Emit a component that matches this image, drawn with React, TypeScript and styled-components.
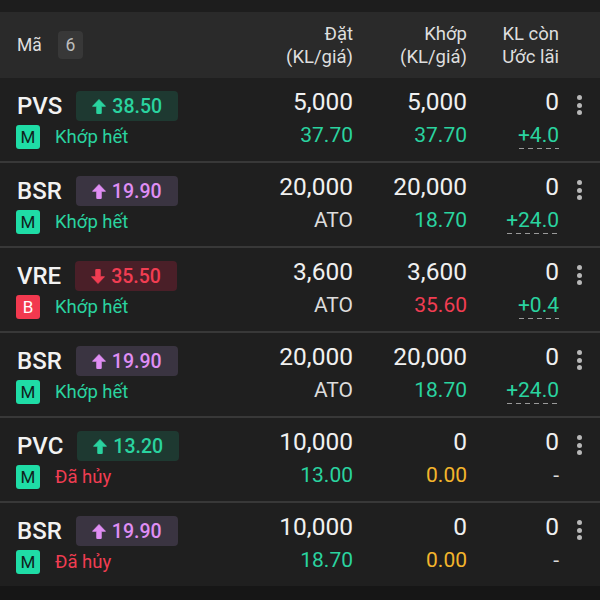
import styled, { createGlobalStyle } from "styled-components";

const GlobalStyle = createGlobalStyle`
  html, body {
    margin: 0;
    padding: 0;
    background: #121212;
  }
  body {
    font-family: Roboto, "Noto Sans", "Liberation Sans", sans-serif;
  }
`;

const GREEN = "#2ad39f";
const RED = "#f13d52";
const PURPLE = "#e08ef4";
const YELLOW = "#f3b52c";

type Tone = "green" | "red" | "purple" | "yellow" | "plain";

const toneColor: Record<Tone, string> = {
  green: GREEN,
  red: RED,
  purple: PURPLE,
  yellow: YELLOW,
  plain: "#dcdcdc",
};

const badgeBg: Record<string, string> = {
  green: "#1e3931",
  red: "#4a1f28",
  purple: "#3a3441",
};

const Screen = styled.div`
  width: 600px;
  height: 600px;
  background: #161616;
  display: flex;
  flex-direction: column;
  overflow: hidden;
`;

const TopStrip = styled.div`
  height: 12px;
  background: #1d1d1d;
`;

const Header = styled.div`
  height: 66px;
  background: #2a2a2a;
  display: grid;
  grid-template-columns: 1fr 110px 114px 92px 41px;
  align-items: center;
  padding-left: 17px;
  box-sizing: border-box;
  color: #dedede;
  font-size: 18.5px;
`;

const HeadLeft = styled.div`
  display: flex;
  align-items: center;
  gap: 16px;
  font-size: 17.5px;
`;

const CountBox = styled.span`
  width: 25px;
  height: 28px;
  border-radius: 4px;
  background: #383838;
  color: #bdbdbd;
  display: flex;
  align-items: center;
  justify-content: center;
  font-size: 17.5px;
`;

const HeadCol = styled.div`
  text-align: right;
  line-height: 23px;
  padding-top: 1px;
`;

const List = styled.div`
  display: flex;
  flex-direction: column;
`;

const Row = styled.div`
  height: 85px;
  box-sizing: border-box;
  border-bottom: 2px solid #383838;
  background: #1f1f1f;
  display: grid;
  grid-template-columns: 1fr 110px 114px 92px 41px;
  grid-template-rows: 30px 24px;
  row-gap: 4px;
  padding: 13px 0 12px 16px;

  &:last-child {
    border-bottom: none;
    height: 83px;
  }
`;

const SymbolLine = styled.div`
  display: flex;
  align-items: center;
  gap: 14px;
`;

const Symbol = styled.span`
  color: #f2f2f2;
  font-size: 24px;
  font-weight: 500;
  padding-left: 1px;
`;

const PriceBadge = styled.span<{ $tone: Tone }>`
  height: 30px;
  padding: 0 16px;
  border-radius: 4px;
  background: ${(p) => badgeBg[p.$tone]};
  color: ${(p) => toneColor[p.$tone]};
  display: flex;
  align-items: center;
  gap: 6px;
  font-size: 19.5px;
  font-weight: 500;
`;

const StatusLine = styled.div`
  display: flex;
  align-items: center;
  gap: 15px;
  white-space: nowrap;
`;

const SideBox = styled.span<{ $buy: boolean }>`
  width: 24px;
  height: 24px;
  border-radius: 3px;
  background: ${(p) => (p.$buy ? "#f2394f" : "#1fdca6")};
  color: ${(p) => (p.$buy ? "#ffffff" : "#10221c")};
  display: flex;
  align-items: center;
  justify-content: center;
  font-size: 17px;
`;

const Status = styled.span<{ $tone: Tone }>`
  color: ${(p) => toneColor[p.$tone]};
  font-size: 18.5px;
`;

const Top = styled.div<{ $col: number }>`
  grid-row: 1;
  grid-column: ${(p) => p.$col};
  text-align: right;
  color: #f0f0f0;
  font-size: 24.5px;
  line-height: 30px;
  margin-top: -4px;
`;

const Bottom = styled.div<{ $tone: Tone; $col: number }>`
  grid-row: 2;
  grid-column: ${(p) => p.$col};
  text-align: right;
  color: ${(p) => toneColor[p.$tone]};
  font-size: 21px;
  line-height: 24px;
  margin-top: -2px;
`;

const Dashed = styled.span`
  position: relative;
  display: inline-block;
  &::after {
    content: "";
    position: absolute;
    left: 1px;
    right: 0;
    bottom: -2px;
    height: 1px;
    background: repeating-linear-gradient(
      to right,
      #9a9a9a 0 5px,
      transparent 5px 9px
    );
  }
`;

const Menu = styled.div`
  grid-row: 1 / span 2;
  grid-column: 5;
  display: flex;
  flex-direction: column;
  align-items: center;
  gap: 2.5px;
  padding-top: 4px;
`;

const Dot = styled.span`
  width: 5px;
  height: 5px;
  border-radius: 50%;
  background: #b8b8b8;
`;

const Arrow = ({ down }: { down?: boolean }) => (
  <svg
    width="14"
    height="15"
    viewBox="0 0 14 15"
    style={{ transform: down ? "rotate(180deg)" : undefined }}
  >
    <path
      d="M7 0.5 L13.5 7.3 L9.3 7.3 L9.3 14 Q9.3 15 8.3 15 L5.7 15 Q4.7 15 4.7 14 L4.7 7.3 L0.5 7.3 Z"
      fill="currentColor"
      stroke="currentColor"
      strokeWidth="0.8"
      strokeLinejoin="round"
    />
  </svg>
);

type Order = {
  sym: string;
  price: string;
  priceTone: Tone;
  down?: boolean;
  buy?: boolean;
  status: string;
  statusTone: Tone;
  qty: string;
  px: string;
  pxTone: Tone;
  mQty: string;
  mPx: string;
  mPxTone: Tone;
  left: string;
  pnl: string;
  pnlTone: Tone;
  dashed?: boolean;
};

const orders: Order[] = [
  { sym: "PVS", price: "38.50", priceTone: "green", status: "Khớp hết", statusTone: "green", qty: "5,000", px: "37.70", pxTone: "green", mQty: "5,000", mPx: "37.70", mPxTone: "green", left: "0", pnl: "+4.0", pnlTone: "green", dashed: true },
  { sym: "BSR", price: "19.90", priceTone: "purple", status: "Khớp hết", statusTone: "green", qty: "20,000", px: "ATO", pxTone: "plain", mQty: "20,000", mPx: "18.70", mPxTone: "green", left: "0", pnl: "+24.0", pnlTone: "green", dashed: true },
  { sym: "VRE", price: "35.50", priceTone: "red", down: true, buy: true, status: "Khớp hết", statusTone: "green", qty: "3,600", px: "ATO", pxTone: "plain", mQty: "3,600", mPx: "35.60", mPxTone: "red", left: "0", pnl: "+0.4", pnlTone: "green", dashed: true },
  { sym: "BSR", price: "19.90", priceTone: "purple", status: "Khớp hết", statusTone: "green", qty: "20,000", px: "ATO", pxTone: "plain", mQty: "20,000", mPx: "18.70", mPxTone: "green", left: "0", pnl: "+24.0", pnlTone: "green", dashed: true },
  { sym: "PVC", price: "13.20", priceTone: "green", status: "Đã hủy", statusTone: "red", qty: "10,000", px: "13.00", pxTone: "green", mQty: "0", mPx: "0.00", mPxTone: "yellow", left: "0", pnl: "-", pnlTone: "plain" },
  { sym: "BSR", price: "19.90", priceTone: "purple", status: "Đã hủy", statusTone: "red", qty: "10,000", px: "18.70", pxTone: "green", mQty: "0", mPx: "0.00", mPxTone: "yellow", left: "0", pnl: "-", pnlTone: "plain" },
];

export default function App() {
  return (
    <>
      <GlobalStyle />
      <Screen>
        <TopStrip />
        <Header>
          <HeadLeft>
            Mã <CountBox>6</CountBox>
          </HeadLeft>
          <HeadCol>
            Đặt
            <br />
            (KL/giá)
          </HeadCol>
          <HeadCol>
            Khớp
            <br />
            (KL/giá)
          </HeadCol>
          <HeadCol>
            KL còn
            <br />
            Ước lãi
          </HeadCol>
          <div />
        </Header>
        <List>
          {orders.map((o, i) => (
            <Row key={i}>
              <SymbolLine>
                <Symbol>{o.sym}</Symbol>
                <PriceBadge $tone={o.priceTone}>
                  <Arrow down={o.down} />
                  {o.price}
                </PriceBadge>
              </SymbolLine>
              <Top $col={2}>{o.qty}</Top>
              <Top $col={3}>{o.mQty}</Top>
              <Top $col={4}>{o.left}</Top>
              <Menu>
                <Dot />
                <Dot />
                <Dot />
              </Menu>
              <StatusLine>
                <SideBox $buy={!!o.buy}>{o.buy ? "B" : "M"}</SideBox>
                <Status $tone={o.statusTone}>{o.status}</Status>
              </StatusLine>
              <Bottom $col={2} $tone={o.pxTone}>{o.px}</Bottom>
              <Bottom $col={3} $tone={o.mPxTone}>{o.mPx}</Bottom>
              <Bottom $col={4} $tone={o.pnlTone}>
                {o.dashed ? <Dashed>{o.pnl}</Dashed> : o.pnl}
              </Bottom>
            </Row>
          ))}
        </List>
      </Screen>
    </>
  );
}
